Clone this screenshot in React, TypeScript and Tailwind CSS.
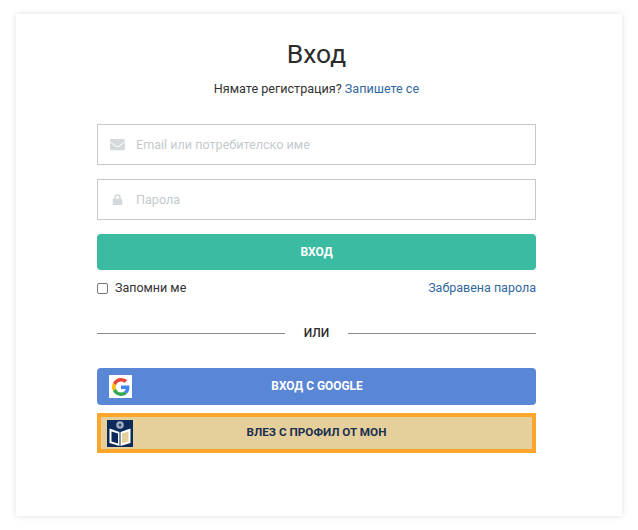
import { FaEnvelope, FaLock } from "react-icons/fa";

// Google "G" mark
const GoogleIcon = () => (
  <span className="flex h-[23px] w-[23px] items-center justify-center bg-white">
    <svg width="18" height="18" viewBox="0 0 48 48">
      <path fill="#EA4335" d="M24 9.500c3.500 0 6.700 1.200 9.200 3.600l6.900-6.900C35.900 2.400 30.500 0 24 0 14.600 0 6.500 5.400 2.600 13.200l8 6.200C12.400 13.700 17.700 9.500 24 9.500z" />
      <path fill="#4285F4" d="M46.500 24.500c0-1.600-.1-3.100-.4-4.500H24v9h12.700c-.6 2.900-2.200 5.400-4.700 7.100l7.700 6c4.500-4.200 6.800-10.300 6.800-17.600z" />
      <path fill="#FBBC05" d="M10.500 28.600c-.5-1.400-.8-3-.8-4.600s.3-3.200.8-4.600l-8-6.200C.9 16.500 0 20.100 0 24s.9 7.500 2.600 10.800l7.900-6.200z" />
      <path fill="#34A853" d="M24 48c6.500 0 11.900-2.100 15.900-5.800l-7.700-6c-2.100 1.400-4.900 2.300-8.200 2.300-6.300 0-11.600-4.200-13.500-9.900l-8 6.200C6.500 42.600 14.600 48 24 48z" />
    </svg>
  </span>
);

// Книжка с @ - логото на МОН
const MonIcon = () => (
  <svg width="26" height="27" viewBox="0 0 26 27" className="block">
    <rect width="26" height="27" fill="#0b2a5b" />
    <circle cx="13" cy="5" r="3.800" fill="#a3adc0" />
    <circle cx="13" cy="5" r="1.500" fill="#2f4670" />
    <path d="M2.500 8.500 L12.500 12 V26 L2.500 23 Z" fill="#fff" />
    <path d="M23.500 8.500 L13.500 12 V26 L23.500 23 Z" fill="#fff" />
    <path d="M4.500 11.500 L11 13.500 V23.500 L4.500 21.500 Z" fill="#0b2a5b" />
    <path d="M21.500 11.500 L15 13.500 V23.500 L21.500 21.500 Z" fill="#e6d19b" />
  </svg>
);

export default function App() {
  return (
    <div className="min-h-[530px] bg-white pt-[14px] pl-[16px] font-['Roboto',sans-serif]">
      <div className="h-[502px] w-[606px] bg-white pt-[24px] pr-[86px] pl-[81px] shadow-[0_0_6px_rgba(0,0,0,0.13)]">
        <h1 className="text-center text-[26.500px] leading-[32px] font-normal text-[#2b2b2b]">Вход</h1>
        <p className="mt-[10px] text-center text-[12.600px] leading-[18px] text-[#333]">
          Нямате регистрация? <a className="text-[#33689f]">Запишете се</a>
        </p>

        <div className="mt-[26px] flex flex-col gap-[14px]">
          <div className="flex h-[41px] items-center border border-[#c8c8c8] pl-[11px]">
            <span className="flex w-[16px] justify-center">
              <FaEnvelope size={15} color="#d3d9dc" />
            </span>
            <span className="ml-[11px] pt-[2px] text-[12.600px] text-[#c5cacd]">Email или потребителско име</span>
          </div>
          <div className="flex h-[41px] items-center border border-[#c8c8c8] pl-[11px]">
            <span className="flex w-[16px] justify-center">
              <FaLock size={11} color="#d3d9dc" />
            </span>
            <span className="ml-[11px] pt-[2px] text-[12.600px] text-[#c5cacd]">Парола</span>
          </div>
        </div>

        <button className="mt-[14px] block h-[36px] w-full rounded-[4px] bg-[#3bbba2] text-[12px] font-bold text-white">
          ВХОД
        </button>

        <div className="mt-[9px] flex items-center justify-between text-[12.500px] leading-[18px]">
          <label className="flex items-center text-[#333]">
            <input type="checkbox" className="mr-[7px] h-[11px] w-[11px] appearance-none rounded-[2px] border border-[#767676] bg-white" />
            Запомни ме
          </label>
          <a className="text-[#33689f]">Забравена парола</a>
        </div>

        <div className="mt-[27px] flex items-center">
          <div className="h-px flex-1 bg-[#8a8a8a]" />
          <span className="w-[63px] text-center text-[12px] leading-[18px] font-medium text-[#2b2b2b]">ИЛИ</span>
          <div className="h-px flex-1 bg-[#8a8a8a]" />
        </div>

        <button className="relative mt-[26px] flex h-[37px] w-full items-center justify-center rounded-[4px] bg-[#5a86d6] text-[11.900px] font-bold text-white">
          <span className="absolute top-[7px] left-[12px]"><GoogleIcon /></span>
          <span className="pl-[1px]">ВХОД С GOOGLE</span>
        </button>

        <button className="relative mt-[8px] flex h-[40px] w-full items-center justify-center border-[4px] border-[#fda62e] bg-[#e5d09b] text-[11.700px] font-bold text-[#1b2f50]">
          <span className="absolute top-[3px] left-[6px]"><MonIcon /></span>
          ВЛЕЗ С ПРОФИЛ ОТ МОН
        </button>
      </div>
    </div>
  );
}
